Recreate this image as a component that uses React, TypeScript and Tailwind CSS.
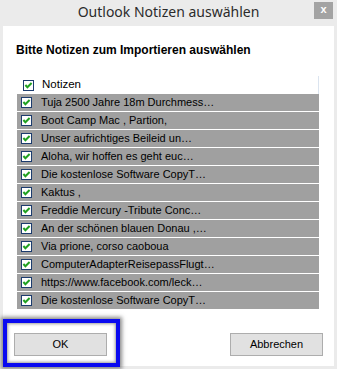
import React from "react";

const notes = [
  "Tuja 2500 Jahre 18m Durchmess…",
  "Boot Camp Mac , Partion,",
  "Unser aufrichtiges Beileid un…",
  "Aloha, wir hoffen es geht euc…",
  "Die kostenlose Software CopyT…",
  "Kaktus ,",
  "Freddie Mercury -Tribute Conc…",
  "An der schönen blauen Donau ,…",
  "Via prione, corso caoboua",
  "ComputerAdapterReisepassFlugt…",
  "https://www.facebook.com/leck…",
  "Die kostenlose Software CopyT…",
];

function CheckBox() {
  return (
    <svg width="11" height="11" viewBox="0 0 11 11" className="shrink-0">
      <rect x="0.5" y="0.5" width="10" height="10" fill="#fff" stroke="#1c3c6e" />
      <path d="M2.4 5 L4.4 7.2 L8.6 3" fill="none" stroke="#21a121" strokeWidth="2" />
    </svg>
  );
}

export default function App() {
  return (
    <div
      className="relative w-[337px] h-[369px] bg-[#ebebeb] overflow-hidden"
      style={{ fontFamily: '"Liberation Sans", Arial, sans-serif' }}
    >
      <div className="h-[26px] grid grid-cols-[1fr_auto_1fr] items-center">
        <div />
        <div
          className="text-[14px] text-[#2b2b2b] leading-none -mt-[2px]"
          style={{ fontFamily: '"Noto Sans", sans-serif' }}
        >
          Outlook Notizen auswählen
        </div>
        <div className="flex justify-end pr-[4px] self-start pt-[2px]">
          <div className="w-[19px] h-[17px] bg-[#a3a3a3] flex items-center justify-center text-white text-[11px] font-bold leading-none pb-[2px]">
            x
          </div>
        </div>
      </div>

      <div className="mx-[3px] h-[340px] bg-white flex flex-col">
        <div className="pl-[13px] pt-[17px] text-[12px] font-bold text-black leading-[14px]">
          Bitte Notizen zum Importieren auswählen
        </div>

        <div className="ml-[14px] w-[302px] mt-[19px]">
          <div className="h-[18px] flex items-center gap-[8px] pl-[6px] border-r border-[#dbe4ef] text-[11.5px] text-black">
            <CheckBox />
            <span>Notizen</span>
          </div>
          {notes.map((n, i) => (
            <div
              key={i}
              className="h-[18px] flex items-center gap-[9px] pl-[4px] bg-[#a0a0a0] border-b border-white text-[11px] text-black"
            >
              <CheckBox />
              <span className="whitespace-nowrap">{n}</span>
            </div>
          ))}
        </div>

        <div className="mt-[23px] flex justify-between px-[11px]">
          <button className="w-[93px] h-[23px] bg-[#e1e1e1] border border-[#adadad] text-[11px] text-black">
            OK
          </button>
          <button className="w-[93px] h-[23px] bg-[#e1e1e1] border border-[#adadad] text-[11px] text-black">
            Abbrechen
          </button>
        </div>
      </div>

      <div className="absolute left-[3px] top-[319px] w-[117px] h-[48px] border-[4px] border-[#0a0af0] shadow-[0_0_4px_2px_rgba(60,60,60,0.6),inset_0_0_3px_1px_rgba(60,60,60,0.5)]" />
    </div>
  );
}
